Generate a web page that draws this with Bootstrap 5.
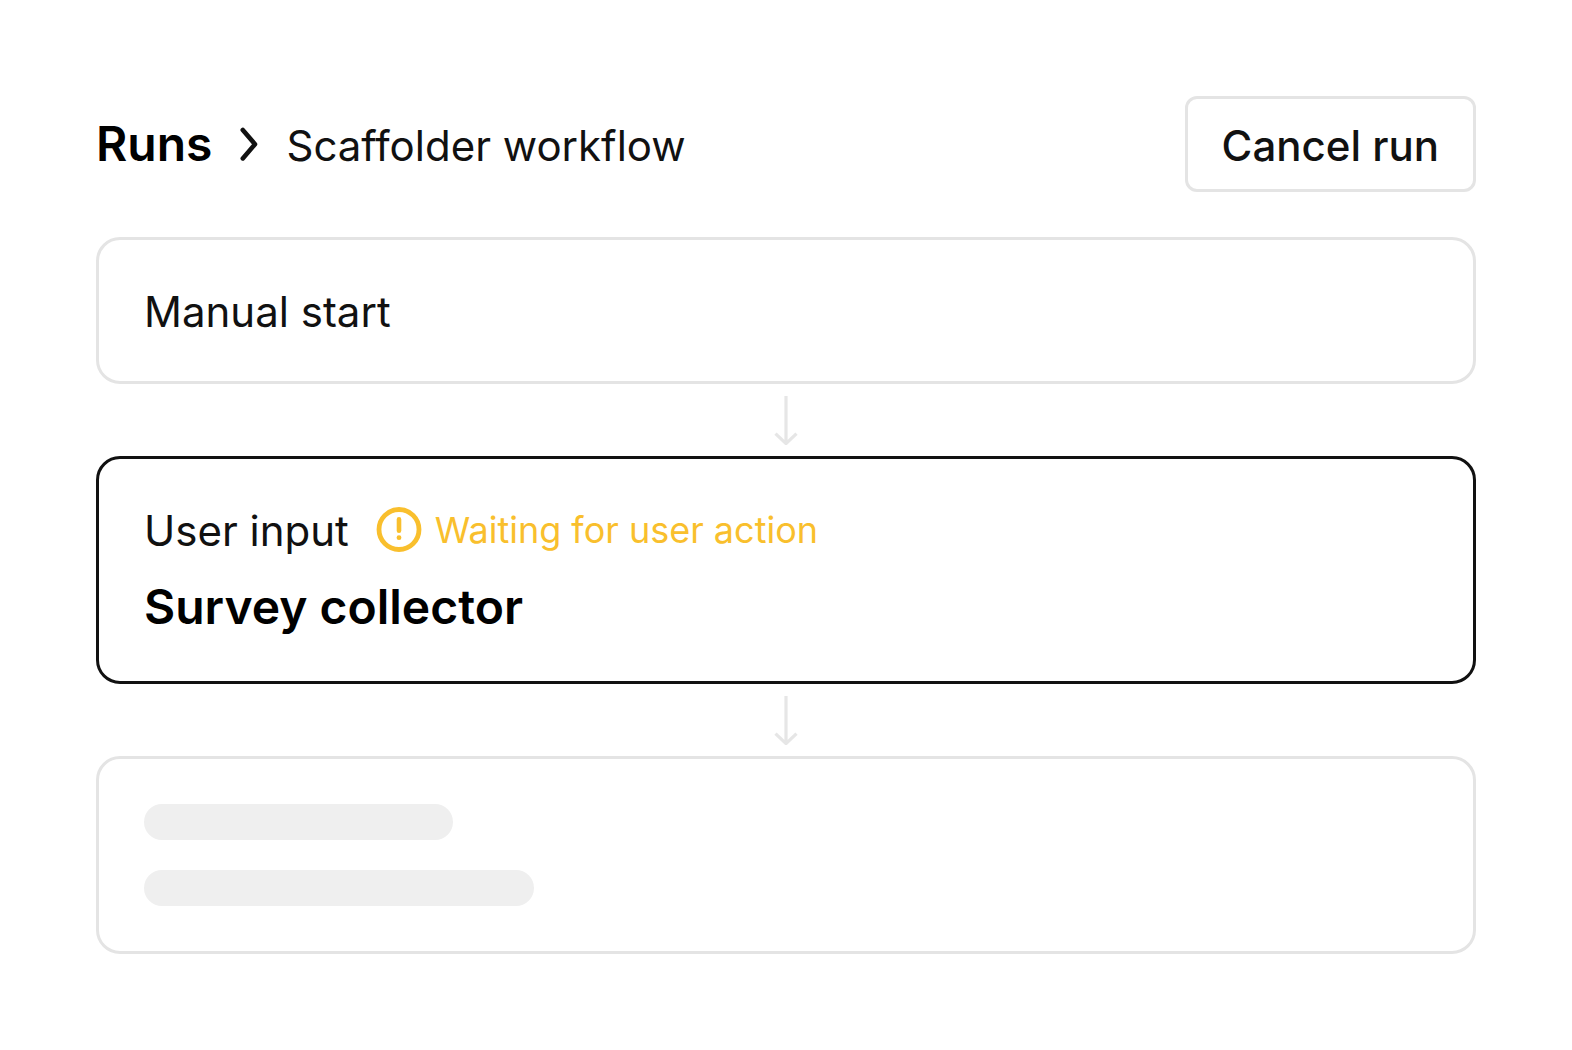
<!DOCTYPE html>
<html lang="en">
<head>
<meta charset="utf-8">
<meta name="viewport" content="width=device-width, initial-scale=1">
<title>Scaffolder workflow</title>
<link href="https://cdn.jsdelivr.net/npm/bootstrap@5.3.0/dist/css/bootstrap.min.css" rel="stylesheet">
<style>
:root{--line:#e4e4e4;--ink:#111;--wait:#f9bf2d}
body{font-family:Inter,"Liberation Sans",sans-serif;color:var(--ink);background:#fff;font-size:42px;line-height:54px}
.run-page{padding:96px}
.run-head{margin-bottom:45px}
.run-title{font-size:48px;line-height:64px;font-weight:600;color:#000}
.crumbs{gap:27px}
.btn-cancel{--bs-btn-border-color:var(--line);--bs-btn-color:var(--ink);--bs-btn-hover-border-color:var(--ink);border-width:3px;border-radius:12px;font-size:42px;line-height:54px;font-weight:500;padding:20px 34px 16px}
.step{border:3px solid var(--line);border-radius:24px;padding:45px 45px 42px}
.step-active{border-color:var(--ink)}
.step-pending{padding-bottom:45px;gap:30px}
.step-head{column-gap:27px}
.step-name{margin-top:17px}
.step-arrow{height:72px}
.wait-note{color:var(--wait);font-size:36px;line-height:52px;gap:13px}
.bone{height:36px;background:#efefef}
.bone-short{width:309px}
.bone-long{width:390px}
</style>
</head>
<body>
<main class="run-page">
  <header class="run-head d-flex flex-wrap justify-content-between align-items-center">
    <nav class="crumbs d-flex align-items-baseline" aria-label="Breadcrumb">
      <a href="#" class="run-title text-decoration-none">Runs</a>
      <svg class="align-self-center" width="20" height="36" viewBox="0 0 20 36" fill="none" stroke="#111" stroke-width="4.6" stroke-linecap="round" stroke-linejoin="round" aria-hidden="true"><path d="M3.8 4L16 18.2L3.8 32.4"/></svg>
      <span aria-current="page">Scaffolder workflow</span>
    </nav>
    <button type="button" class="btn btn-cancel">Cancel run</button>
  </header>

  <section class="step">Manual start</section>

  <div class="step-arrow d-flex justify-content-center align-items-center">
    <svg width="24" height="50" viewBox="0 0 24 50" fill="none" stroke="#e6e6e6" stroke-width="3.2" aria-hidden="true"><path d="M12 1v47M1.5 38.6L12 48.6L22.5 38.6"/></svg>
  </div>

  <section class="step step-active">
    <div class="step-head d-flex flex-wrap align-items-start">
      <span>User input</span>
      <span class="wait-note d-flex align-items-center">
        <svg width="46" height="46" viewBox="0 0 46 46" fill="none" stroke="#f9bf2d" stroke-linecap="round" aria-hidden="true"><circle cx="23" cy="22.5" r="20" stroke-width="4.8"/><path d="M23 12.4v11.4" stroke-width="4.6"/><circle cx="23" cy="30.7" r="2.4" fill="#f9bf2d" stroke="none"/></svg>
        <span>Waiting for user action</span>
      </span>
    </div>
    <h2 class="step-name run-title mb-0">Survey collector</h2>
  </section>

  <div class="step-arrow d-flex justify-content-center align-items-center">
    <svg width="24" height="50" viewBox="0 0 24 50" fill="none" stroke="#e6e6e6" stroke-width="3.2" aria-hidden="true"><path d="M12 1v47M1.5 38.6L12 48.6L22.5 38.6"/></svg>
  </div>

  <section class="step step-pending d-flex flex-column" aria-busy="true">
    <div class="bone bone-short rounded-pill"></div>
    <div class="bone bone-long rounded-pill"></div>
  </section>
</main>
<script src="https://cdn.jsdelivr.net/npm/bootstrap@5.3.0/dist/js/bootstrap.bundle.min.js"></script>
</body>
</html>
